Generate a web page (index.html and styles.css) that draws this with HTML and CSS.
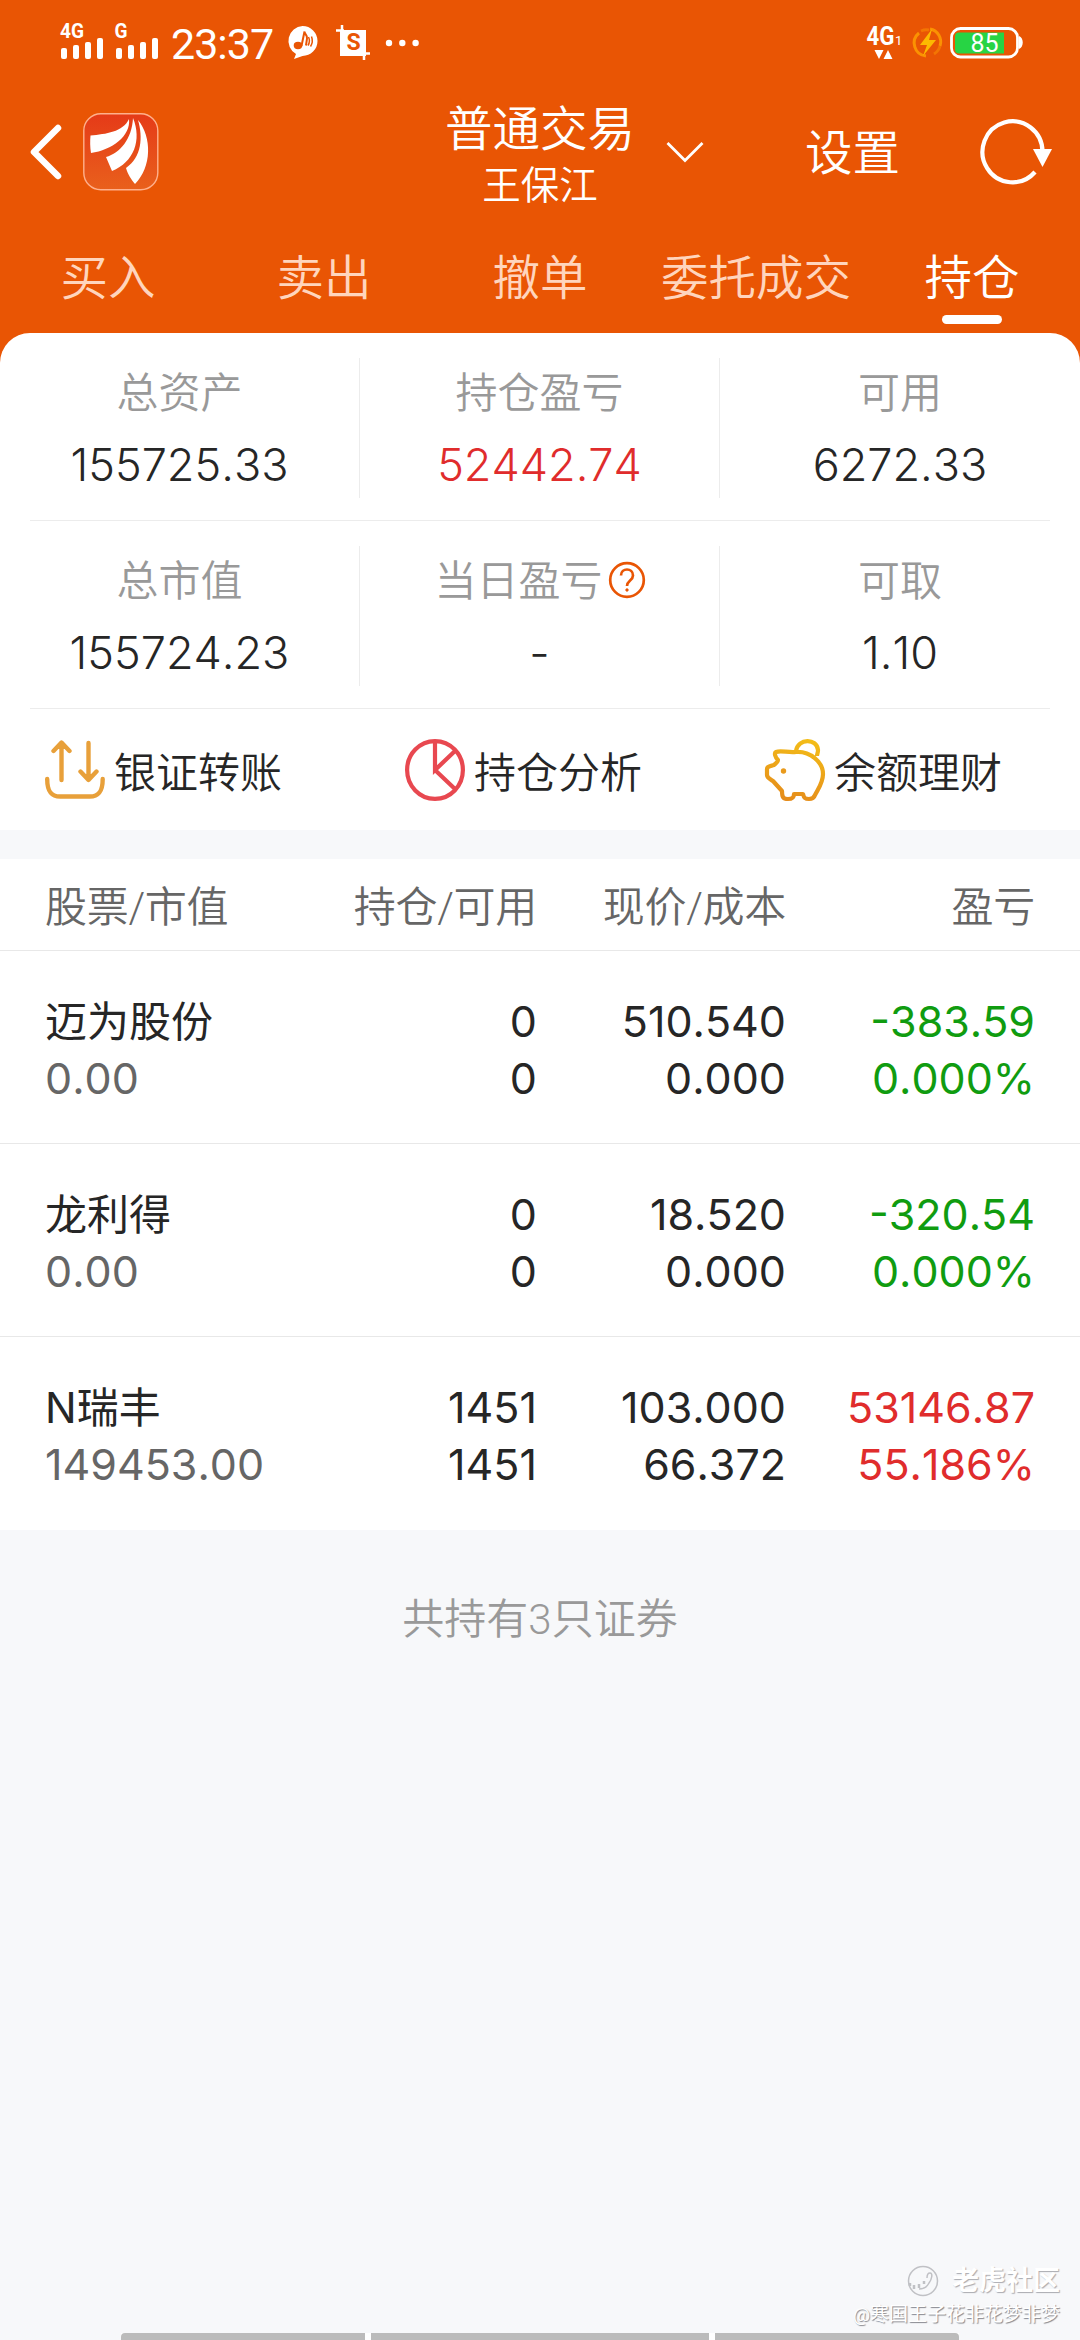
FILE: index.html
```html
<!DOCTYPE html>
<html lang="zh-CN">
<head>
<meta charset="utf-8">
<title>普通交易</title>
<link rel="stylesheet" href="styles.css">
</head>
<body>
<div class="screen">
  <header class="header">
    <div class="status">
      <svg class="signals" width="100" height="48" viewBox="60 14 100 48" fill="#fff">
        <text class="net" x="60" y="38" textLength="24" lengthAdjust="spacingAndGlyphs">4G</text>
        <text class="net" x="114.500" y="38" textLength="13" lengthAdjust="spacingAndGlyphs">G</text>
        <rect x="61" y="48" width="6" height="11" rx="2"/><rect x="73" y="45" width="6" height="14" rx="2"/><rect x="85" y="42" width="6" height="17" rx="2"/><rect x="97" y="38" width="6" height="21" rx="2"/>
        <rect x="116" y="48" width="6" height="11" rx="2"/><rect x="128" y="45" width="6" height="14" rx="2"/><rect x="140" y="42" width="6" height="17" rx="2"/><rect x="152" y="38" width="6" height="21" rx="2"/>
      </svg>
      <span class="clock">23:37</span>
      <svg class="music" width="32" height="36" viewBox="0 0 32 36">
        <path d="M15.500 1a15 15 0 0 1 0 30L7 34l2-5A15 15 0 0 1 15.500 1z" fill="#fff"/>
        <g fill="none" stroke="#e95504" stroke-width="2"><ellipse cx="11" cy="20.500" rx="3.300" ry="2.700" fill="#e95504"/><path d="M14.500 21 17.500 6.500c0 3 3 3 2.500 7l-1 7"/><path d="M21.500 12c1.500 3 1 6-.5 8.500M24.500 11.500c1.500 4 1 7-1 10" stroke-width="1.500"/></g>
      </svg>
      <svg class="crop" width="34" height="36" viewBox="0 0 34 36" fill="none">
        <path d="M4 5h26v26H4z" fill="#fff"/><path d="M6 0v8M0 5.500h8M28 28v7M26 28.500h8" stroke="#fff" stroke-width="2.500"/><text x="17.500" y="25" text-anchor="middle" class="crop-s">S</text>
      </svg>
      <svg class="dots" width="34" height="8" viewBox="0 0 34 8" fill="#fff"><circle cx="4" cy="4" r="3.200"/><circle cx="17.300" cy="4" r="3.200"/><circle cx="30.600" cy="4" r="3.200"/></svg>
      <svg class="lte" width="36" height="48" viewBox="866 20 36 48" fill="#fff">
        <text x="866.500" y="46" class="lte-text" textLength="28" lengthAdjust="spacingAndGlyphs">4G</text><text x="895" y="46" class="lte-sub">1</text>
        <path d="M874.500 51h9l-4.500 9zM883.500 60h9l-4.500-9z"/>
      </svg>
      <svg class="bolt" width="30" height="32" viewBox="0 0 30 32" fill="none">
        <path d="M13 29A13 13 0 0 1 6 6M17 2a13 13 0 0 1 10 17" stroke="#fb9202" stroke-width="3"/><path d="M8 4a13 13 0 0 1 8-1M21 27a13 13 0 0 0 6-8" stroke="#f37503" stroke-width="3"/><path d="M19 2 7 18h7l-4 11 13-16h-7z" fill="#fdb900"/>
      </svg>
      <svg class="battery" width="74" height="32" viewBox="0 0 74 32">
        <rect x="1.500" y="1.500" width="66" height="28.500" rx="9" fill="none" stroke="#fff" stroke-width="2.800"/><path d="M69 9c5 2 5 11 0 13z" fill="#fff"/>
        <path d="M9 5.500h45v21H9a4 4 0 0 1-4-4v-13a4 4 0 0 1 4-4z" fill="#27d444"/><text x="34.500" y="25" text-anchor="middle" class="battery-text">85</text>
      </svg>
    </div>
    <div class="titlebar">
      <svg class="back" width="34" height="60" viewBox="0 0 34 60" fill="none" stroke="#fff" stroke-width="6.500" stroke-linecap="round" stroke-linejoin="round"><path d="M30 5 6 29l24 24"/></svg>
      <svg class="logo" width="76" height="78" viewBox="0 0 76 78">
        <defs><linearGradient id="lg" x1="0" y1="0" x2="0" y2="1"><stop offset="0" stop-color="#e53a18"/><stop offset="1" stop-color="#e9601c"/></linearGradient></defs>
        <rect x=".8" y=".8" width="74" height="76" rx="17" fill="url(#lg)" stroke="#ffb08c" stroke-width="1.400"/>
        <g fill="#fff"><path d="M7.500 22.500C23 21 40 19 46 6c2 17-17 31-38 34-1-6-1-12-.5-17.500z"/><path d="M50 5c9 22 1 44-21 53-2-5-4-9-6-14 14-4 26-18 27-39z"/><path d="M55 7c14 17 14 47-3 64-4-5-7-9-9-16 16-11 17-31 12-48z"/></g>
      </svg>
      <div class="account"><span class="account-type">普通交易</span><span class="account-name">王保江</span></div>
      <svg class="chevron" width="38" height="24" viewBox="0 0 38 24" fill="none" stroke="#fff" stroke-width="2.800"><path d="M1.500 2 19 19.500 36.500 2"/></svg>
      <span class="settings">设置</span>
      <svg class="refresh" width="74" height="70" viewBox="0 0 74 70" fill="none">
        <path d="M62.500 35A30 30.500 0 1 0 55 55" stroke="#fff" stroke-width="4.200"/><path d="M53 32h19L62.500 50z" fill="#fff"/>
      </svg>
    </div>
    <nav class="tabs"><span class="tab">买入</span><span class="tab">卖出</span><span class="tab">撤单</span><span class="tab">委托成交</span><span class="tab active">持仓</span></nav>
  </header>

  <section class="summary">
    <div class="stats">
      <div class="stat"><span class="label">总资产</span><span class="value">155725.33</span></div>
      <div class="stat"><span class="label">持仓盈亏</span><span class="value up">52442.74</span></div>
      <div class="stat"><span class="label">可用</span><span class="value">6272.33</span></div>
    </div>
    <div class="stats">
      <div class="stat"><span class="label">总市值</span><span class="value">155724.23</span></div>
      <div class="stat"><span class="label">当日盈亏<svg class="help" width="42" height="40" viewBox="0 0 42 40" fill="none" stroke="#e95504" stroke-width="2.700"><circle cx="24" cy="18" r="16.800"/><path d="M18 13.500c0-8 12-8 12 0 0 5-6 5-6 10.500"/><circle cx="24" cy="28" r="1.200" fill="#e95504" stroke-width="1"/></svg></span><span class="value">-</span></div>
      <div class="stat"><span class="label">可取</span><span class="value">1.10</span></div>
    </div>
    <div class="actions">
      <div class="action"><svg width="60" height="62" viewBox="0 0 60 62" fill="none" stroke="#e8a03a" stroke-width="4.400" stroke-linecap="round" stroke-linejoin="round"><path d="M16.500 41V4M8.500 12l8-8.500 8 8.500M43.500 4v36M35.500 32.500l8 8.500 8-8.500M2.200 40c0 11 3 17.500 13 17.500h29.500c10 0 13-6.500 13-17.500"/></svg><span>银证转账</span></div>
      <div class="action"><svg width="60" height="62" viewBox="0 0 60 62" fill="none" stroke="#e84850" stroke-width="4.200"><ellipse cx="30" cy="31" rx="27.900" ry="28.900"/><path d="M30 2v29l20-19M30 31l20 19"/></svg><span>持仓分析</span></div>
      <div class="action"><svg width="60" height="62" viewBox="0 0 60 62" fill="none" stroke="url(#pg)" stroke-width="4.200" stroke-linejoin="round"><defs><linearGradient id="pg" gradientUnits="userSpaceOnUse" x1="40" y1="0" x2="25" y2="62"><stop stop-color="#f3bd18"/><stop offset="1" stop-color="#e58c1b"/></linearGradient></defs><path d="M11 13c5-2 12 1 20 0 14-1 27 10 27 22 0 9-5 15-8 21-1 3-3 4-6 4-4 0-5-1-6-5h-9c0 4-2 5-6 5-5 0-6-2-6-8l-9-10c-3-2-6-3-6-6v-6c0-3 4-3 7-4 2-2 4-3 4-5-3-3-4-7-2-8zM31 12C33-1 52-1 53 11c0 3-1 4-1 6"/><circle cx="18.500" cy="32" r="2.700" fill="#e99a1c" stroke="none"/></svg><span>余额理财</span></div>
    </div>
  </section>

  <section class="holdings">
    <div class="row head"><span>股票/市值</span><span>持仓/可用</span><span>现价/成本</span><span>盈亏</span></div>
    <div class="row"><div class="cell"><b>迈为股份</b><i>0.00</i></div><div class="cell"><span>0</span><span>0</span></div><div class="cell"><span>510.540</span><span>0.000</span></div><div class="cell down"><span>-383.59</span><span>0.000%</span></div></div>
    <div class="row"><div class="cell"><b>龙利得</b><i>0.00</i></div><div class="cell"><span>0</span><span>0</span></div><div class="cell"><span>18.520</span><span>0.000</span></div><div class="cell down"><span>-320.54</span><span>0.000%</span></div></div>
    <div class="row"><div class="cell"><b>N瑞丰</b><i>149453.00</i></div><div class="cell"><span>1451</span><span>1451</span></div><div class="cell"><span>103.000</span><span>66.372</span></div><div class="cell up"><span>53146.87</span><span>55.186%</span></div></div>
  </section>
  <p class="total">共持有3只证券</p>

  <div class="watermark">
    <div class="brand"><svg width="32" height="32" viewBox="0 0 32 32" fill="none" stroke="#c0c1c5" stroke-width="1.500"><circle cx="16" cy="16" r="14.500"/><path d="M20 13c0-3 1-5 3-5 3 0 2 6-1 10-2 4-6 6-10 6"/><path d="M3 18v3M7 20v4M12 19v4M17 16v3" stroke-width="2.500"/></svg><span>老虎社区</span></div>
    <div class="user">@寒国王子花非花梦非梦</div>
  </div>
  <div class="navbar"><span></span><span></span><span></span></div>
</div>
</body>
</html>
```
FILE: styles.css
```css
* { box-sizing: border-box; }
body { margin: 0; background: #f7f8fa; }
.screen {
  position: relative;
  width: 1080px;
  height: 2340px;
  overflow: hidden;
  background: #f7f8fa;
  color: #262626;
  font-family: Roboto, "Noto Sans CJK SC", sans-serif;
  font-size: 42px;
  font-weight: 350;
}
svg { display: block; flex: none; overflow: visible; }

.header { height: 363px; background: #e95504; color: #fff; }
.status { display: flex; align-items: center; height: 86px; padding: 0 60px; }
.signals { margin-top: -10px; }
.net { font: 700 20px Roboto, sans-serif; }
.clock { width: 104px; margin-left: 11px; font-size: 43px; font-weight: 400; line-height: 50px; margin-top: 2px; letter-spacing: -1px; }
.music { margin-left: 12px; }
.crop { margin-left: 17px; }
.crop-s { font: 700 23px Roboto, sans-serif; fill: #e95504; }
.dots { margin-left: 15px; }
.lte { margin-left: auto; }
.lte-text { font: 700 26px Roboto, sans-serif; }
.lte-sub { font: 400 13px Roboto, sans-serif; }
.bolt { margin-left: 11px; }
.battery { margin-left: 7px; margin-right: -4px; }
.battery-text { font: 400 25px Roboto, sans-serif; fill: #fff; }

.titlebar { display: flex; align-items: center; height: 139px; padding: 0 28px 9px; }
.back { margin-top: 3px; }
.logo { margin-left: 21px; margin-top: 2px; }
.account { display: flex; flex-direction: column; align-items: center; width: 190px; margin-left: 286px; }
.account-type { font-size: 47.500px; line-height: 64px; margin-top: 5px; }
.account-name { font-size: 38.500px; line-height: 48px; }
.chevron { margin-left: 31px; margin-top: 4px; }
.settings { width: 96px; margin-left: 101px; font-size: 47.500px; line-height: 64px; margin-top: 6px; }
.refresh { margin-left: auto; margin-right: -2px; margin-top: 1px; }

.tabs { display: grid; grid-template-columns: repeat(5, 1fr); height: 108px; }
.tab { display: flex; flex-direction: column; align-items: center; padding-top: 20px; font-size: 47.500px; line-height: 68px; color: #ffd5bd; white-space: nowrap; }
.tab.active { color: #fff; }
.tab.active::after { content: ""; width: 60px; height: 9px; margin-top: 2px; border-radius: 5px; background: #fff; }

.summary { margin-top: -30px; height: 497px; padding: 0 30px; background: #fff; border-radius: 30px 30px 0 0; }
.stats { display: grid; grid-template-columns: 330px 360px 330px; height: 188px; padding-top: 25px; border-bottom: 1px solid #ececec; }
.stat { display: flex; flex-direction: column; align-items: center; height: 140px; border-right: 1px solid #ececec; }
.stat:first-child { padding-right: 30px; }
.stat:last-child { border: 0; padding-left: 30px; }
.label { display: flex; align-items: center; height: 72px; color: #999; line-height: 72px; }
.value { height: 70px; font-family: Inter, sans-serif; font-size: 45px; line-height: 70px; font-kerning: none; }
.up { color: #e02c2c; }
.down { color: #109c10; }
.actions { display: grid; grid-template-columns: repeat(3, 360px); height: 121px; padding-left: 15px; }
.action { display: flex; align-items: center; gap: 9px; }

.holdings { margin-top: 29px; }
.row { display: grid; grid-template-columns: 243px 249px 249px 249px; height: 193px; padding: 42px 45px 0; background: #fff; border-bottom: 1px solid #e8e8e8; line-height: 57px; text-align: right; }
.row:last-child { border: 0; }
.row > :first-child { text-align: left; }
.row.head { height: 92px; padding-top: 20px; color: #666; letter-spacing: -.3px; }
.cell { display: flex; flex-direction: column; font-family: Inter, "Noto Sans CJK SC", sans-serif; font-size: 43px; font-weight: 400; white-space: nowrap; font-kerning: none; }
.cell b { font-size: 42px; font-weight: 400; }
.cell i { font-style: normal; color: #666; }
.total { margin: 60px 0 0; line-height: 60px; text-align: center; color: #999; }

.watermark { position: absolute; right: 20px; bottom: 11px; display: flex; flex-direction: column; align-items: flex-end; color: #fff; }
.brand { display: flex; align-items: center; gap: 13px; font-size: 27px; font-weight: 700; line-height: 38px; text-shadow: 1px 1px 1px #a9aab0; }
.user { font-size: 19px; line-height: 29px; font-weight: 400; text-shadow: 1px 1px 1px #85868c; }
.navbar { position: absolute; left: 121px; bottom: 0; display: grid; grid-template-columns: 244px 338px 244px; gap: 6px; height: 7px; background: #fff; }
.navbar span { background: #bbb; }
.navbar span:first-child { border-radius: 4px 0 0 0; }
.navbar span:last-child { border-radius: 0 4px 0 0; }
```
